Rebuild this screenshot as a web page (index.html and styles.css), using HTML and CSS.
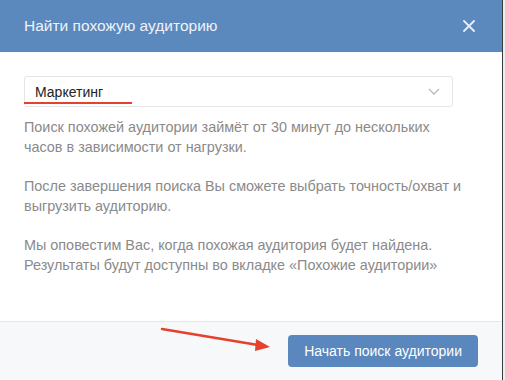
FILE: index.html
```html
<!DOCTYPE html>
<html lang="ru">
<head>
    <title>Найти похожую аудиторию</title>
    <link rel="stylesheet" href="styles.css">
</head>
<body>
    <div class="modal">
        <div class="modal-header">
            <span class="modal-title">Найти похожую аудиторию</span>
            <svg class="close" width="12" height="12" viewBox="0 0 12 12">
                <path d="M1 1L11 11M11 1L1 11" stroke="#e9eff7" stroke-width="1.8" stroke-linecap="round"/>
            </svg>
        </div>
        <div class="modal-body">
            <div class="select">
                <span class="select-value">Маркетинг</span>
                <svg class="chevron" width="12" height="7" viewBox="0 0 12 7">
                    <path d="M1 1L6 6L11 1" fill="none" stroke="#b4bcc6" stroke-width="1.4"/>
                </svg>
                <span class="mark-underline"></span>
            </div>
            <p>Поиск похожей аудитории займёт от 30 минут до нескольких часов в зависимости от нагрузки.</p>
            <p>После завершения поиска Вы сможете выбрать точность/охват и выгрузить аудиторию.</p>
            <p>Мы оповестим Вас, когда похожая аудитория будет найдена. Результаты будут доступны во вкладке «Похожие аудитории»</p>
        </div>
        <div class="modal-footer">
            <svg class="mark-arrow" width="120" height="30" viewBox="0 0 120 30">
                <path d="M2 3L104 20" stroke="#e5412d" stroke-width="2.4" stroke-linecap="round"/>
                <path d="M96 13L110 21L95 25Z" fill="#e5412d"/>
            </svg>
            <button class="btn">Начать поиск аудитории</button>
        </div>
    </div>
</body>
</html>
```

FILE: styles.css
```css
body {
    margin: 0;
    background-color: #eceef1;
    font-family: "Liberation Sans", Arial, sans-serif;
}
.modal {
    width: 502px;
    height: 380px;
    background-color: white;
    border-right: 1px solid #3a3a3a;
    display: flex;
    flex-direction: column;
}
.modal-header {
    height: 52px;
    background-color: #5b88bd;
    display: flex;
    align-items: center;
    justify-content: space-between;
    padding: 0 27px 0 24px;
}
.modal-title {
    color: #eef3f9;
    font-size: 15.5px;
}
.modal-body {
    flex: 1;
    padding: 24px 24px 0;
}
.select {
    position: relative;
    height: 29px;
    border: 1px solid #e3e5e9;
    border-radius: 3px;
    display: flex;
    align-items: center;
    justify-content: space-between;
    padding: 0 12px 0 10px;
    margin: 0 25px 10px 0;
}
.select-value {
    font-size: 14px;
    color: #222;
}
.mark-underline {
    position: absolute;
    left: -1px;
    bottom: 2px;
    width: 108px;
    height: 2px;
    background-color: #e5412d;
}
p {
    margin: 0 12px 19px 0;
    font-size: 14.4px;
    line-height: 20px;
    color: #8a8a8a;
}
.modal-footer {
    position: relative;
    height: 58px;
    border-top: 1px solid #e7e8ec;
    background-color: #f7f8fa;
    display: flex;
    align-items: center;
    justify-content: flex-end;
    padding: 0 24px;
}
.mark-arrow {
    position: absolute;
    left: 160px;
    top: 4px;
}
.btn {
    height: 32px;
    padding: 0 16px;
    border: none;
    border-radius: 4px;
    background-color: #5a87bd;
    color: white;
    font-family: inherit;
    font-size: 14px;
}
```
